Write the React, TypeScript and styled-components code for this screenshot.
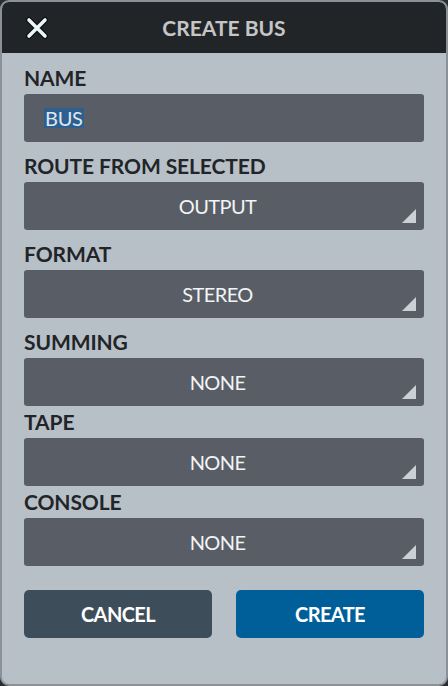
import React from "react";
import styled, { createGlobalStyle } from "styled-components";

const GlobalStyle = createGlobalStyle`
  html, body {
    margin: 0;
    padding: 0;
    background: #2a2d30;
  }
  body {
    font-family: Lato, "Open Sans", "Liberation Sans", sans-serif;
  }
`;

const Dialog = styled.div`
  width: 448px;
  height: 686px;
  box-sizing: border-box;
  border: 2px solid #8b9197;
  border-radius: 9px;
  background: #b8c0c7;
  overflow: hidden;
  display: flex;
  flex-direction: column;
`;

const Header = styled.div`
  height: 51px;
  background: #222527;
  display: flex;
  align-items: center;
  justify-content: center;
  position: relative;
`;

const Title = styled.div`
  color: #c4c6c7;
  font-weight: 700;
  font-size: 21px;
  letter-spacing: 0;
`;

const CloseButton = styled.button`
  position: absolute;
  left: 22px;
  top: 13px;
  width: 26px;
  height: 26px;
  padding: 0;
  border: none;
  background: none;
  display: flex;
  align-items: center;
  justify-content: center;
`;

const Body = styled.div`
  padding: 13px 22px 0;
  display: flex;
  flex-direction: column;
`;

const Field = styled.div<{ $gap: number }>`
  display: flex;
  flex-direction: column;
  margin-bottom: ${(p) => p.$gap}px;
`;

const Label = styled.div`
  color: #222527;
  font-weight: 700;
  font-size: 21px;
  line-height: 24px;
  height: 24px;
  margin-bottom: 4px;
  letter-spacing: -0.1px;
`;

const Box = styled.div`
  height: 48px;
  background: #595d66;
  border-radius: 3px;
  display: flex;
  align-items: center;
  color: #f2f4f5;
  font-size: 20px;
  letter-spacing: -0.6px;
  position: relative;
`;

const TextInput = styled(Box)`
  padding-left: 20px;
  letter-spacing: -0.3px;
`;

const Selection = styled.span`
  background: #2f5f8f;
  color: #dce8f2;
  padding: 0 1px;
  line-height: 20px;
`;

const Select = styled(Box)`
  justify-content: center;
  padding-right: 13px;
`;

const Corner = styled.div`
  position: absolute;
  right: 8px;
  bottom: 7px;
  width: 0;
  height: 0;
  border-left: 14px solid transparent;
  border-bottom: 14px solid #c9d0d6;
`;

const Buttons = styled.div`
  display: grid;
  grid-template-columns: 1fr 1fr;
  column-gap: 24px;
  margin-top: 24px;
`;

const Button = styled.button<{ $primary?: boolean }>`
  height: 48px;
  border: none;
  border-radius: 5px;
  background: ${(p) => (p.$primary ? "#005f99" : "#3d4e5a")};
  color: #ffffff;
  font-family: inherit;
  font-weight: 700;
  font-size: 20px;
  letter-spacing: -0.6px;
`;

const fields = [
  { label: "ROUTE FROM SELECTED", value: "OUTPUT", gap: 12 },
  { label: "FORMAT", value: "STEREO", gap: 12 },
  { label: "SUMMING", value: "NONE", gap: 4 },
  { label: "TAPE", value: "NONE", gap: 4 },
  { label: "CONSOLE", value: "NONE", gap: 0 },
];

const App: React.FC = () => {
  return (
    <>
      <GlobalStyle />
      <Dialog>
        <Header>
          <CloseButton aria-label="close">
            <svg width="26" height="26" viewBox="0 0 26 26">
              <path d="M5 5 L21 21 M21 5 L5 21" stroke="#0c0e10" strokeWidth="6" strokeLinecap="round" />
              <path d="M5 5 L21 21 M21 5 L5 21" stroke="#eaf6fa" strokeWidth="3.6" strokeLinecap="round" />
            </svg>
          </CloseButton>
          <Title>CREATE BUS</Title>
        </Header>
        <Body>
          <Field $gap={12}>
            <Label>NAME</Label>
            <TextInput>
              <Selection>BUS</Selection>
            </TextInput>
          </Field>
          {fields.map((f) => (
            <Field key={f.label} $gap={f.gap}>
              <Label>{f.label}</Label>
              <Select>
                {f.value}
                <Corner />
              </Select>
            </Field>
          ))}
          <Buttons>
            <Button>CANCEL</Button>
            <Button $primary>CREATE</Button>
          </Buttons>
        </Body>
      </Dialog>
    </>
  );
};

export default App;
